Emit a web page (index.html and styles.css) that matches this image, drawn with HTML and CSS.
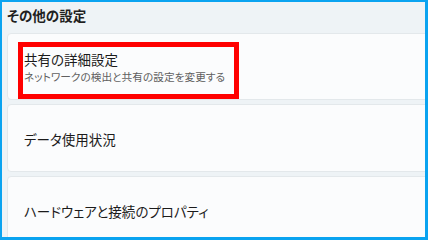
FILE: index.html
```html
<!DOCTYPE html>
<html lang="ja">
<head>
  <meta charset="UTF-8" />
  <meta name="viewport" content="width=device-width, initial-scale=1" />
  <title>その他の設定</title>
  <link rel="stylesheet" href="styles.css">
</head>
<body>
  <div class="frame">
    <h2 class="section-title">その他の設定</h2>

    <div class="card-list">
      <div class="card">
        <div class="card-text">
          <div class="card-title">共有の詳細設定</div>
          <div class="card-sub">ネットワークの検出と共有の設定を変更する</div>
        </div>
        <div class="highlight"></div>
      </div>

      <div class="card">
        <div class="card-text">
          <div class="card-title">データ使用状況</div>
        </div>
      </div>

      <div class="card">
        <div class="card-text">
          <div class="card-title">ハードウェアと接続のプロパティ</div>
        </div>
      </div>
    </div>
  </div>
</body>
</html>
```

FILE: styles.css
```css
html, body {
  margin: 0; padding: 0;
  height: 100%;
  background: #eef3f6;
  font-family: "Noto Sans CJK JP", "Noto Sans", sans-serif;
  font-feature-settings: "palt";
  color: #1b1b1b;
}
* { box-sizing: border-box; }

.frame {
  width: 428px;
  height: 240px;
  overflow: hidden;
  border-style: solid;
  border-color: #0aa3f0;
  border-width: 2px 3px 3px 2px;
  background: #eef3f6;
  padding-left: 5px;
}

.section-title {
  margin: 0;
  height: 31px;
  padding-top: 4px;
  font-size: 13.5px;
  font-weight: 700;
  line-height: 18px;
  color: #1f1f1f;
}

.card-list {
  display: flex;
  flex-direction: column;
  gap: 4px;
  margin-right: -6px;
}

.card {
  position: relative;
  display: flex;
  align-items: center;
  height: 68px;
  padding: 0 16px;
  background: #fbfcfd;
  border: 1px solid #e3e8eb;
  border-radius: 4px;
}

.card:first-child {
  height: 67px;
}

.card-text {
  display: flex;
  flex-direction: column;
  gap: 1px;
  padding-top: 1px;
}

.card-title {
  font-size: 13.5px;
  line-height: 18px;
}

.card-sub {
  font-size: 10.7px;
  line-height: 15px;
  color: #606060;
}

.highlight {
  position: absolute;
  left: 10px;
  top: 8px;
  width: 221px;
  height: 57px;
  border: 5px solid #ff0000;
}
```
